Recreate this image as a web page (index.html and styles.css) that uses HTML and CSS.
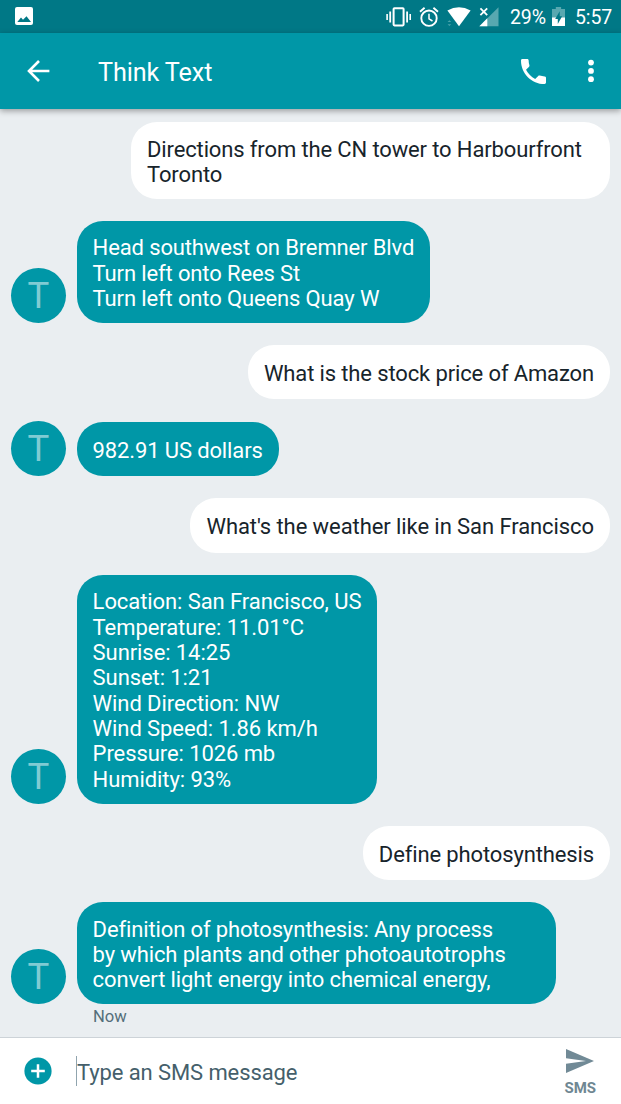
FILE: index.html
```html
<!DOCTYPE html>
<html lang="en">
<head>
<meta charset="utf-8">
<title>Think Text</title>
<link rel="stylesheet" href="styles.css">
</head>
<body>
<div class="screen">
  <div class="status">
    <svg class="picture" width="18" height="18" viewBox="0 0 18 18"><rect width="18" height="18" rx="2" fill="#fff"/><path d="M2.3 15 6 10.5l2 2.3 3.5-3.6L16 15z" fill="#007886"/></svg>
    <svg class="vibrate" width="26" height="20" viewBox="0 0 26 20" fill="none" stroke="#fff"><rect x="7.6" y="1.2" width="10" height="17.2" rx=".8" stroke-width="2"/><path d="M4.2 4.5v11M21.1 4.5v11" stroke-width="1.8"/><path d="M1.1 7v6M24.2 7v6" stroke-width="1.6"/></svg>
    <svg class="alarm" width="20" height="21" viewBox="0 0 20 21" fill="none" stroke="#fff" stroke-width="1.9"><circle cx="10" cy="11.2" r="7.7"/><path d="M10 6.8v5l3.5 2.2" stroke-width="1.5"/><path d="M1 4.7 5.6.8M19 4.7 14.4.8"/></svg>
    <svg class="wifi" width="24" height="20" viewBox="0 0 24 20"><path d="M.4 3.6Q12-3.2 23.6 3.6L12 19.2z" fill="#fff"/><path d="m.6 15 1.8-1.8L4.2 15zm0 2.2L2.4 19l1.8-1.8z" fill="#4ba4ad"/></svg>
    <svg class="signal" width="20" height="20" viewBox="0 0 20 20"><path d="M19.5.3v18.9H.4z" fill="#58a8b0"/><path d="M8.3 11.3v7.9H.4z" fill="#fff"/><path d="m1.4 1.4 6.8 6.8m0-6.8L1.4 8.2" stroke="#fff" stroke-width="1.8"/></svg>
    <span class="percent">29%</span>
    <svg class="battery" width="13" height="20" viewBox="0 0 13 20"><path d="M0 2h3.8V0h5.3v2H13v9H0z" fill="#58a8b0"/><path d="M0 10.5h13V19H0z" fill="#fff"/><path d="M7.7 4.3 3.2 12h2.6v5l4.3-7.8H7.7z" fill="#007886"/></svg>
    <span class="time">5:57</span>
  </div>
  <header class="appbar">
    <svg class="back" width="24" height="24" viewBox="0 0 24 24" fill="none" stroke="#fff" stroke-width="2.6"><path d="M23.4 12H3M13 2 3 12l10 10"/></svg>
    <h1 class="title">Think Text</h1>
    <svg class="phone" width="25" height="25" viewBox="3 3 18 18"><path d="M6.62 10.79c1.44 2.83 3.76 5.14 6.59 6.59l2.2-2.2c.27-.27.67-.36 1.02-.24 1.12.37 2.33.57 3.57.57.55 0 1 .45 1 1V20c0 .55-.45 1-1 1C10.61 21 3 13.39 3 4c0-.55.45-1 1-1h3.5c.55 0 1 .45 1 1 0 1.25.2 2.45.57 3.57.11.35.03.74-.25 1.02z" fill="#fff"/></svg>
    <svg class="more" width="6" height="24" viewBox="0 0 6 24" fill="#fff"><circle cx="3" cy="3.6" r="2.9"/><circle cx="3" cy="11.9" r="2.9"/><circle cx="3" cy="20.2" r="2.9"/></svg>
  </header>
  <main class="thread">
    <div class="row sent"><div class="bubble wide">Directions from the CN tower to Harbourfront<br>Toronto</div></div>
    <div class="row"><div class="avatar">T</div><div class="bubble">Head southwest on Bremner Blvd<br>Turn left onto Rees St<br>Turn left onto Queens Quay W</div></div>
    <div class="row sent"><div class="bubble">What is the stock price of Amazon</div></div>
    <div class="row"><div class="avatar">T</div><div class="bubble">982.91 US dollars</div></div>
    <div class="row sent"><div class="bubble loose">What's the weather like in San Francisco</div></div>
    <div class="row"><div class="avatar">T</div><div class="bubble loose">Location: San Francisco, US<br>Temperature: 11.01°C<br>Sunrise: 14:25<br>Sunset: 1:21<br>Wind Direction: NW<br>Wind Speed: 1.86 km/h<br>Pressure: 1026 mb<br>Humidity: 93%</div></div>
    <div class="row sent"><div class="bubble">Define photosynthesis</div></div>
    <div class="row"><div class="avatar">T</div><div class="bubble wide">Definition of photosynthesis: Any process<br>by which plants and other photoautotrophs<br>convert light energy into chemical energy,</div></div>
    <div class="stamp">Now</div>
  </main>
  <footer class="composer">
    <svg class="add" width="28" height="28" viewBox="0 0 28 28"><circle cx="14" cy="14" r="13.6" fill="#0097a7"/><path d="M14 7.2v13.6M7.2 14h13.6" stroke="#fff" stroke-width="2.5"/></svg>
    <div class="field">Type an SMS message</div>
    <div class="send">
      <svg width="28" height="24" viewBox="0 0 28 24"><path d="M0 0 28 12 0 24v-9.3L20 12 0 9.3z" fill="#718a96"/></svg>
      <span>SMS</span>
    </div>
  </footer>
</div>
</body>
</html>
```
FILE: styles.css
```css
* { box-sizing: border-box; }
body { margin: 0; font-family: Roboto, "Liberation Sans", sans-serif; }
.screen { display: flex; flex-direction: column; width: 621px; height: 1104px; overflow: hidden; background: #eaeef1; }
svg { display: block; flex: none; }
.status { display: flex; flex: none; align-items: flex-start; height: 33px; padding: 7px 8px 0 15px; background: #007886; color: #fff; }
.vibrate { margin-left: 353px; }
.alarm { margin-left: 7px; }
.wifi { margin-left: 8px; }
.signal { margin-left: 8px; }
.percent { width: 36px; margin-left: 11px; }
.battery { margin-left: 6px; }
.time { margin-left: 10px; }
.percent, .time { font-size: 19.5px; line-height: 22px; white-space: nowrap; letter-spacing: -.1px; }
.appbar { display: flex; flex: none; align-items: center; height: 76px; padding: 0 27px 0 26px; background: #0097a7; color: #fff; box-shadow: 0 2px 6px rgba(0, 0, 0, .35); z-index: 1; }
.title { flex: 1; margin: 4px 0 0 48px; font-size: 25.2px; font-weight: 400; line-height: 32px; letter-spacing: -.1px; }
.phone { margin-right: 42px; }
.thread { display: flex; flex: 1; flex-direction: column; gap: 22px; min-height: 0; padding: 13px 11px 0; }
.row { display: flex; flex: none; align-items: flex-end; gap: 11px; }
.sent { justify-content: flex-end; }
.bubble { display: flex; align-items: center; min-height: 54.4px; padding: 14.5px 16px 11.5px; border-radius: 26px; background: #0097a7; color: #fff; font-size: 22px; line-height: 25.38px; letter-spacing: -.13px; white-space: nowrap; }
.loose { letter-spacing: -.08px; }
.sent .bubble { background: #fff; color: #17242b; }
.wide { width: 479px; }
.avatar { flex: none; width: 55px; height: 55px; margin-right: -.4px; border-radius: 50%; background: #0097a7; color: #80cbd3; font-size: 36.5px; font-weight: 400; line-height: 56px; text-align: center; }
.stamp { margin: -19px 0 0 82px; color: #546e7a; font-size: 16.6px; line-height: 20px; }
.composer { display: flex; flex: none; align-items: center; height: 67px; padding: 0 25px 0 24px; border-top: 1px solid #cdd3d8; background: #fff; }
.field { flex: 1; height: 30px; margin-left: 24px; border-left: 1px solid #90a4ae; color: #455f6b; font-size: 22px; line-height: 33px; letter-spacing: -.1px; }
.send { display: flex; flex-direction: column; align-items: center; gap: 6px; padding-top: 3px; color: #6f8792; font-size: 15px; font-weight: 700; line-height: 18px; }
```
